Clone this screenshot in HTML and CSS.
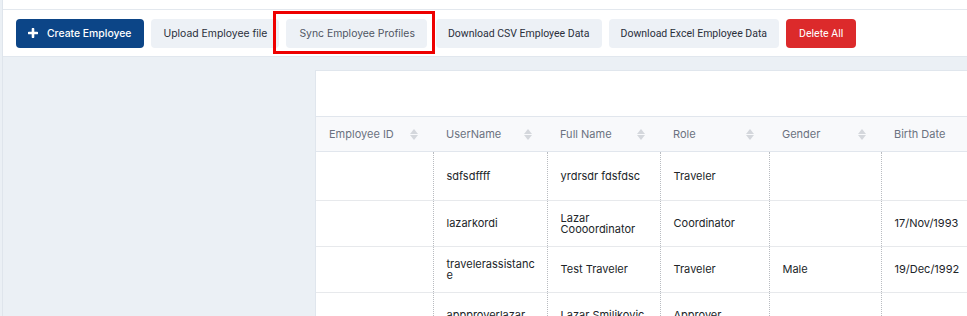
FILE: index.html
```html
<!DOCTYPE html>
<html lang="en">
  <head>
    <meta charset="UTF-8" />
    <meta name="viewport" content="width=device-width, initial-scale=1.0" />
    <title>Employees</title>
    <link rel="stylesheet" href="styles.css">
  </head>
  <body>
    <div class="page">
      <div class="topline"></div>

      <div class="toolbar">
        <button class="btn btn-primary">
          <svg class="plus" width="10" height="10" viewBox="0 0 10 10">
            <path d="M5 1v8M1 5h8" stroke="#fff" stroke-width="2.6" stroke-linecap="round" />
          </svg>
          Create Employee
        </button>
        <button class="btn btn-light">Upload Employee file</button>
        <span class="marked">
          <button class="btn btn-light btn-muted">Sync Employee Profiles</button>
        </span>
        <button class="btn btn-light btn-alt">Download CSV Employee Data</button>
        <button class="btn btn-light btn-alt">Download Excel Employee Data</button>
        <button class="btn btn-danger btn-alt">Delete All</button>
      </div>

      <div class="main">
        <div class="side"></div>
        <div class="card">
          <div class="card-top"></div>
          <table class="grid">
            <colgroup>
              <col style="width: 117px" />
              <col style="width: 114px" />
              <col style="width: 113px" />
              <col style="width: 109px" />
              <col style="width: 112px" />
              <col style="width: 120px" />
            </colgroup>
            <thead>
              <tr>
                <th>Employee ID <span class="sort"></span></th>
                <th>UserName <span class="sort"></span></th>
                <th>Full Name <span class="sort"></span></th>
                <th>Role <span class="sort"></span></th>
                <th>Gender <span class="sort"></span></th>
                <th>Birth Date</th>
              </tr>
            </thead>
            <tbody>
              <tr class="first">
                <td></td>
                <td>sdfsdffff</td>
                <td>yrdrsdr fdsfdsc</td>
                <td>Traveler</td>
                <td></td>
                <td></td>
              </tr>
              <tr>
                <td></td>
                <td>lazarkordi</td>
                <td>Lazar Coooordinator</td>
                <td>Coordinator</td>
                <td></td>
                <td>17/Nov/1993</td>
              </tr>
              <tr>
                <td></td>
                <td>travelerassistance</td>
                <td>Test Traveler</td>
                <td>Traveler</td>
                <td>Male</td>
                <td>19/Dec/1992</td>
              </tr>
              <tr>
                <td></td>
                <td>appproverlazar</td>
                <td>Lazar Smiljkovic</td>
                <td>Approver</td>
                <td></td>
                <td></td>
              </tr>
            </tbody>
          </table>
        </div>
      </div>
    </div>
  </body>
</html>
```

FILE: styles.css
```css
html,
body {
  margin: 0;
  height: 100%;
  overflow: hidden;
}
body {
  font-family: Inter, "Noto Sans", sans-serif;
  background-color: #ebf0f5;
  color: #212529;
}
.page {
  height: 100%;
  margin-left: 2px;
  border-left: 1px solid #dfe5ec;
}
.topline {
  height: 9px;
  background-color: white;
  border-bottom: 1px solid #e3e8ee;
}
.toolbar {
  display: flex;
  align-items: center;
  gap: 7px;
  height: 46px;
  padding-left: 13px;
  background-color: white;
  border-bottom: 1px solid #e1e7ee;
}
.btn {
  height: 29px;
  padding: 0 12px;
  border: none;
  border-radius: 4px;
  font-family: inherit;
  font-size: 10.4px;
  cursor: pointer;
  display: inline-flex;
  align-items: center;
  gap: 9px;
}
.btn-alt {
  font-family: Roboto, "Noto Sans", sans-serif;
  font-size: 10.5px;
}
.btn-primary {
  background-color: #0c4587;
  color: white;
  font-weight: 500;
  padding: 0 13px 0 12px;
}
.btn-light {
  background-color: #edf1f6;
  color: #2a2f3b;
}
.btn-muted {
  color: #4f5563;
  padding: 0 12px 0 13px;
}
.btn-danger {
  background-color: #dc2a2b;
  color: white;
  padding: 0 13px;
}
.marked {
  position: relative;
  display: inline-flex;
  margin-right: 2px;
}
.marked::after {
  content: "";
  position: absolute;
  left: -13px;
  right: -8px;
  top: -8px;
  bottom: -6px;
  border: 3px solid #ee0000;
  pointer-events: none;
}
.main {
  display: grid;
  grid-template-columns: 312px 700px;
  padding-top: 13px;
}
.card {
  background-color: white;
  border: 1px solid #e0e6ed;
  border-right: none;
}
.card-top {
  height: 45px;
}
.grid {
  border-collapse: collapse;
  table-layout: fixed;
  width: 685px;
  font-size: 11px;
}
.grid th {
  height: 34px;
  padding: 0 13px;
  text-align: left;
  font-weight: 400;
  color: #6b7280;
  background-color: #f8f9fb;
  border-top: 1px solid #e1e6ed;
  border-bottom: 1px solid #e1e6ed;
  position: relative;
}
.sort {
  position: absolute;
  right: 15px;
  top: 12px;
  width: 8px;
  height: 11px;
}
.sort::before,
.sort::after {
  content: "";
  position: absolute;
  left: 0;
  border-left: 4px solid transparent;
  border-right: 4px solid transparent;
}
.sort::before {
  top: 0;
  border-bottom: 5px solid #d4d7dc;
}
.sort::after {
  bottom: 0;
  border-top: 5px solid #d4d7dc;
}
.grid td {
  height: 45px;
  padding: 0 9px 0 13px;
  line-height: 11px;
  overflow-wrap: anywhere;
  border-bottom: 1px solid #e7e9ec;
  border-left: 1px dotted #b9bcc1;
}
.grid td:first-child {
  border-left: none;
}
.grid tr.first td {
  height: 48px;
}
```
